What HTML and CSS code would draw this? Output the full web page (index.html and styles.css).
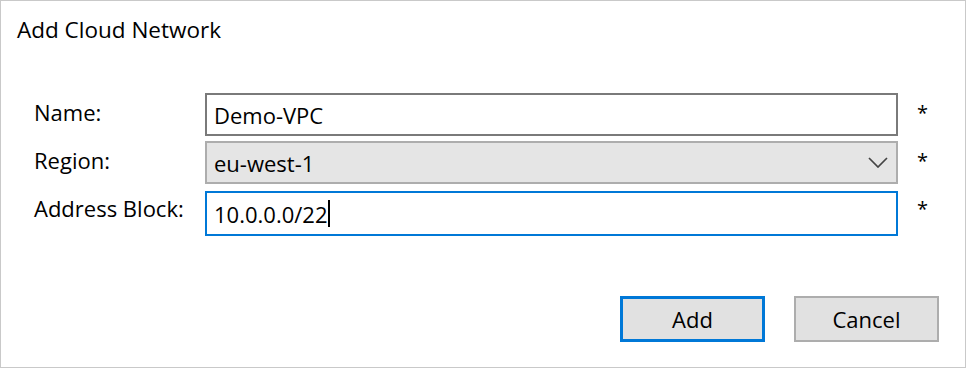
FILE: index.html
```html
<!DOCTYPE html>
<html>
<head>
<meta charset="utf-8">
<link rel="stylesheet" href="styles.css">
</head>
<body>
<div class="dialog">
  <div class="title">Add Cloud Network</div>
  <div class="form">
    <label class="label">Name:</label>
    <div class="field input">Demo-VPC</div>
    <span class="req">*</span>

    <label class="label">Region:</label>
    <div class="field select">
      <span>eu-west-1</span>
      <svg class="chev" width="20" height="11" viewBox="0 0 20 11"><path d="M1 1 L10 10 L19 1" fill="none" stroke="#444" stroke-width="1.7"/></svg>
    </div>
    <span class="req">*</span>

    <label class="label">Address Block:</label>
    <div class="field input focus">10.0.0.0/22<span class="caret"></span></div>
    <span class="req">*</span>
  </div>
  <div class="buttons">
    <button class="btn default">Add</button>
    <button class="btn">Cancel</button>
  </div>
</div>
</body>
</html>
```
FILE: styles.css
```css
html, body {
  margin: 0;
  padding: 0;
  background: #fff;
}
body {
  font-family: "Open Sans", "Noto Sans", sans-serif;
  font-size: 22px;
  color: #000;
}
.dialog {
  box-sizing: border-box;
  width: 966px;
  height: 368px;
  border: 1px solid #c9c9c9;
  display: flex;
  flex-direction: column;
}
.title {
  padding: 15px 0 0 16px;
  height: 40px;
  box-sizing: border-box;
  line-height: 28px;
  font-size: 22.5px;
}
.form {
  margin-top: 52px;
  padding-left: 33px;
  display: grid;
  grid-template-columns: 171px 693px auto;
  grid-auto-rows: 43px;
  row-gap: 5px;
  align-items: center;
}
.label {
  line-height: 28px;
  margin-top: -5px;
}
.field {
  box-sizing: border-box;
  height: 43px;
  display: flex;
  align-items: center;
  padding: 0 7px;
  border: 2px solid #7a7a7a;
  background: #fff;
}
.select {
  background: #e5e5e5;
  border-color: #adadad;
  justify-content: space-between;
  padding-right: 8px;
}
.focus {
  border-color: #0078d7;
  height: 45px;
  margin-top: 6px;
}
.caret {
  display: inline-block;
  width: 1.5px;
  height: 27px;
  background: #000;
  margin-left: 1px;
}
.req {
  padding-left: 19px;
  font-size: 20px;
  margin-top: -5px;
}
.buttons {
  margin-top: auto;
  margin-bottom: 25px;
  display: flex;
  justify-content: flex-end;
  gap: 29px;
  padding-right: 26px;
}
.btn {
  font-family: inherit;
  font-size: 22px;
  color: #000;
  width: 145px;
  height: 46px;
  background: #e1e1e1;
  border: 2px solid #adadad;
  padding: 0;
}
.btn.default {
  border: 3px solid #0078d7;
}
```
